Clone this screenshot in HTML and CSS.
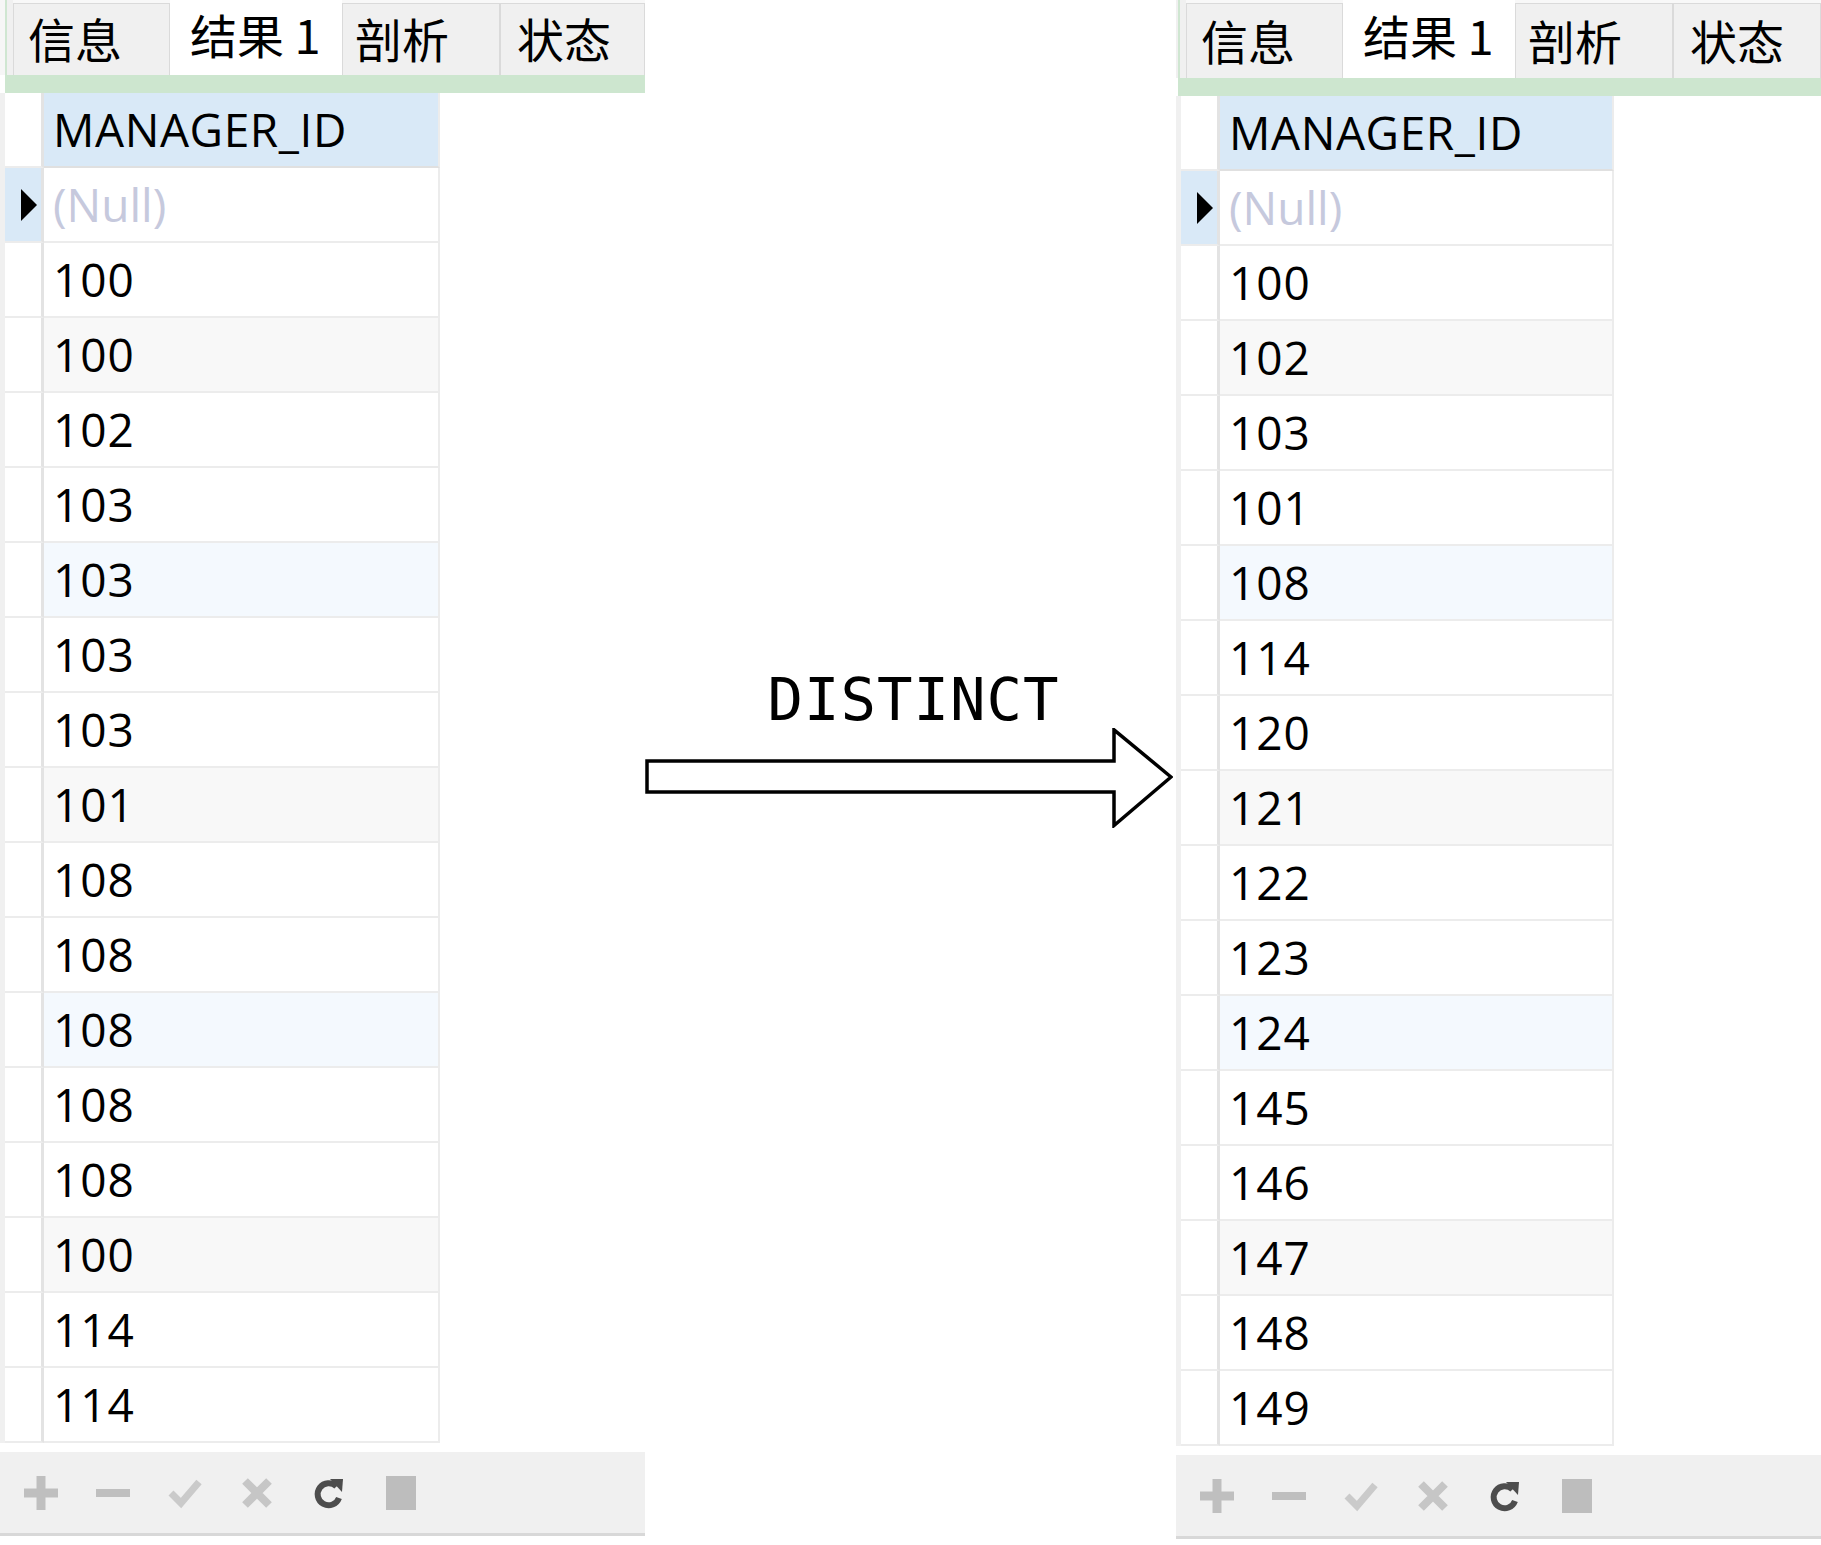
FILE: index.html
```html
<!DOCTYPE html>
<html lang="zh">
<head>
<meta charset="utf-8">
<title>DISTINCT</title>
<link rel="stylesheet" href="styles.css">
</head>
<body>
<div class="page">

  <section class="panel panel--left">
    <div class="tabbar">
      <div class="tabbar-edge"></div>
      <div class="tab tab--1">信息</div>
      <div class="tab tab--2 tab--active">结果 1</div>
      <div class="tab tab--3">剖析</div>
      <div class="tab tab--4">状态</div>
    </div>
    <div class="greenbar"></div>
    <div class="grid">
      <div class="row row--head"><div class="ind"></div><div class="cell">MANAGER_ID</div></div>
      <div class="row row--cur"><div class="ind"><span class="caret"></span></div><div class="cell cell--null">(Null)</div></div>
      <div class="row"><div class="ind"></div><div class="cell">100</div></div>
      <div class="row row--alt"><div class="ind"></div><div class="cell">100</div></div>
      <div class="row"><div class="ind"></div><div class="cell">102</div></div>
      <div class="row"><div class="ind"></div><div class="cell">103</div></div>
      <div class="row row--hl"><div class="ind"></div><div class="cell">103</div></div>
      <div class="row"><div class="ind"></div><div class="cell">103</div></div>
      <div class="row"><div class="ind"></div><div class="cell">103</div></div>
      <div class="row row--alt"><div class="ind"></div><div class="cell">101</div></div>
      <div class="row"><div class="ind"></div><div class="cell">108</div></div>
      <div class="row"><div class="ind"></div><div class="cell">108</div></div>
      <div class="row row--hl"><div class="ind"></div><div class="cell">108</div></div>
      <div class="row"><div class="ind"></div><div class="cell">108</div></div>
      <div class="row"><div class="ind"></div><div class="cell">108</div></div>
      <div class="row row--alt"><div class="ind"></div><div class="cell">100</div></div>
      <div class="row"><div class="ind"></div><div class="cell">114</div></div>
      <div class="row"><div class="ind"></div><div class="cell">114</div></div>
    </div>
    <div class="grid-gap"></div>
    <div class="toolbar">
      <svg class="ico" viewBox="0 0 34 34"><rect x="0" y="12.5" width="34" height="9" fill="#bfbfbf"/><rect x="12.5" y="0" width="9" height="34" fill="#bfbfbf"/></svg>
      <svg class="ico" viewBox="0 0 34 34"><rect x="0" y="13" width="34" height="8" fill="#bfbfbf"/></svg>
      <svg class="ico" viewBox="0 0 34 34"><polyline points="3,17 13,27 31,6" fill="none" stroke="#cacaca" stroke-width="7"/></svg>
      <svg class="ico" viewBox="0 0 34 34"><path d="M5 5 L29 29 M29 5 L5 29" stroke="#c6c6c6" stroke-width="8" fill="none"/></svg>
      <svg class="ico" viewBox="0 0 34 34"><path d="M24.5 10.5 A11 11 0 1 0 27 22" fill="none" stroke="#4d4d4d" stroke-width="6"/><polygon points="18,3 31,3 30,16" fill="#4d4d4d"/></svg>
      <svg class="ico" viewBox="0 0 34 34"><rect x="2" y="0" width="30" height="34" fill="#bdbdbd"/></svg>
    </div>
  </section>

  <section class="middle">
    <div class="label">DISTINCT</div>
    <svg class="arrow" viewBox="0 0 528 100" width="528" height="100">
      <polygon points="2,33 469,33 469,1.8 526,49 469,97.5 469,64 2,64" fill="#fff" stroke="#000" stroke-width="3.5" stroke-linejoin="miter"/>
    </svg>
  </section>

  <section class="panel panel--right">
    <div class="tabbar">
      <div class="tabbar-edge"></div>
      <div class="tab tab--1">信息</div>
      <div class="tab tab--2 tab--active">结果 1</div>
      <div class="tab tab--3">剖析</div>
      <div class="tab tab--4">状态</div>
    </div>
    <div class="greenbar"></div>
    <div class="grid">
      <div class="row row--head"><div class="ind"></div><div class="cell">MANAGER_ID</div></div>
      <div class="row row--cur"><div class="ind"><span class="caret"></span></div><div class="cell cell--null">(Null)</div></div>
      <div class="row"><div class="ind"></div><div class="cell">100</div></div>
      <div class="row row--alt"><div class="ind"></div><div class="cell">102</div></div>
      <div class="row"><div class="ind"></div><div class="cell">103</div></div>
      <div class="row"><div class="ind"></div><div class="cell">101</div></div>
      <div class="row row--hl"><div class="ind"></div><div class="cell">108</div></div>
      <div class="row"><div class="ind"></div><div class="cell">114</div></div>
      <div class="row"><div class="ind"></div><div class="cell">120</div></div>
      <div class="row row--alt"><div class="ind"></div><div class="cell">121</div></div>
      <div class="row"><div class="ind"></div><div class="cell">122</div></div>
      <div class="row"><div class="ind"></div><div class="cell">123</div></div>
      <div class="row row--hl"><div class="ind"></div><div class="cell">124</div></div>
      <div class="row"><div class="ind"></div><div class="cell">145</div></div>
      <div class="row"><div class="ind"></div><div class="cell">146</div></div>
      <div class="row row--alt"><div class="ind"></div><div class="cell">147</div></div>
      <div class="row"><div class="ind"></div><div class="cell">148</div></div>
      <div class="row"><div class="ind"></div><div class="cell">149</div></div>
    </div>
    <div class="grid-gap"></div>
    <div class="toolbar">
      <svg class="ico" viewBox="0 0 34 34"><rect x="0" y="12.5" width="34" height="9" fill="#bfbfbf"/><rect x="12.5" y="0" width="9" height="34" fill="#bfbfbf"/></svg>
      <svg class="ico" viewBox="0 0 34 34"><rect x="0" y="13" width="34" height="8" fill="#bfbfbf"/></svg>
      <svg class="ico" viewBox="0 0 34 34"><polyline points="3,17 13,27 31,6" fill="none" stroke="#cacaca" stroke-width="7"/></svg>
      <svg class="ico" viewBox="0 0 34 34"><path d="M5 5 L29 29 M29 5 L5 29" stroke="#c6c6c6" stroke-width="8" fill="none"/></svg>
      <svg class="ico" viewBox="0 0 34 34"><path d="M24.5 10.5 A11 11 0 1 0 27 22" fill="none" stroke="#4d4d4d" stroke-width="6"/><polygon points="18,3 31,3 30,16" fill="#4d4d4d"/></svg>
      <svg class="ico" viewBox="0 0 34 34"><rect x="2" y="0" width="30" height="34" fill="#bdbdbd"/></svg>
    </div>
  </section>

</div>
</body>
</html>
```

FILE: styles.css
```css
* {
  box-sizing: border-box;
  margin: 0;
  padding: 0;
}

html,
body {
  background: #ffffff;
}

body {
  width: 1821px;
  height: 1545px;
  overflow: hidden;
  font-family: "Open Sans", "Noto Sans CJK SC", sans-serif;
  color: #000;
}

.page {
  display: flex;
  height: 1545px;
}

/* ---------- panels ---------- */
.panel {
  display: flex;
  flex-direction: column;
  width: 645px;
  flex: none;
}

.panel--right {
  width: 645px;
}

.tabbar {
  display: flex;
  align-items: flex-end;
  height: 75px;
  background: #f8f8f8;
}

.panel--right .tabbar {
  height: 78px;
}

.tabbar-edge {
  width: 13px;
  align-self: stretch;
  background: linear-gradient(to right, #f6f6f6 0 5px, #cfe6d1 5px 7px, #f0f0f0 7px);
}

.panel--right .tabbar-edge {
  width: 10px;
  background: linear-gradient(to right, #f0f0f0 0 2px, #cfe6d1 2px 4px, #f0f0f0 4px);
}

.tab {
  height: 72px;
  display: flex;
  align-items: center;
  background: #f0f0f0;
  border: 1px solid #dadada;
  border-bottom: none;
  font-family: "Noto Sans CJK SC", "Open Sans", sans-serif;
  font-size: 47px;
  line-height: 1;
  padding-bottom: 4px;
  white-space: nowrap;
  overflow: hidden;
}

.panel--right .tab {
  height: 75px;
}

.tab--1 {
  width: 157px;
  padding-left: 14px;
}

.tab--2 {
  width: 172px;
  padding-left: 20px;
}

.tab--3 {
  width: 158px;
  padding-left: 12px;
}

.tab--4 {
  flex: 1;
  padding-left: 16px;
}

.tab--active {
  height: 75px;
  background: #ffffff;
  border: none;
  padding-bottom: 9px;
}

.panel--right .tab--active {
  height: 78px;
}

.greenbar {
  height: 18px;
  margin-left: 5px;
  background: #cde6cf;
}

.panel--right .greenbar {
  margin-left: 2px;
}

/* ---------- grid ---------- */
.grid {
  display: flex;
  flex-direction: column;
  border-left: 5px solid #f0f0f0;
}

.row {
  display: flex;
  height: 75px;
}

.ind {
  width: 39px;
  display: flex;
  align-items: center;
  padding-left: 16px;
  background: #ffffff;
  border-right: 3px solid #e3e3e3;
  border-bottom: 2px solid #ececec;
}

.cell {
  width: 396px;
  display: flex;
  align-items: center;
  padding-left: 9px;
  padding-bottom: 2px;
  font-size: 46px;
  letter-spacing: 1px;
  background: #ffffff;
  border-right: 2px solid #ececec;
  border-bottom: 2px solid #ececec;
  white-space: nowrap;
}

.panel--right .cell {
  width: 394px;
}

.row--head .cell {
  background: #d9e9f7;
  letter-spacing: 0.6px;
  border-bottom-color: #e0e0e0;
}

.row--alt .cell {
  background: #f8f8f8;
}

.row--hl .cell {
  background: #f4f9fe;
}

.row--cur .ind {
  background: #d9e9f7;
}

.cell--null {
  color: #c6c9dd;
  letter-spacing: 0;
}

.caret {
  width: 0;
  height: 0;
  border-top: 16px solid transparent;
  border-bottom: 16px solid transparent;
  border-left: 16px solid #000;
}

.grid-gap {
  height: 9px;
}

/* ---------- toolbar ---------- */
.toolbar {
  height: 84px;
  display: flex;
  align-items: center;
  gap: 38px;
  padding-left: 24px;
  background: #f0f0f0;
  border-bottom: 3px solid #d8d8d8;
}

.ico {
  width: 34px;
  height: 34px;
  display: block;
  flex: none;
}

/* ---------- middle ---------- */
.middle {
  width: 531px;
  flex: none;
  display: flex;
  flex-direction: column;
  padding-top: 672px;
}

.label {
  font-family: "DejaVu Sans Mono", "Liberation Mono", monospace;
  font-size: 59px;
  line-height: 56px;
  letter-spacing: 1px;
  text-align: center;
  padding-left: 6px;
  color: #000;
}

.arrow {
  display: block;
}
```
